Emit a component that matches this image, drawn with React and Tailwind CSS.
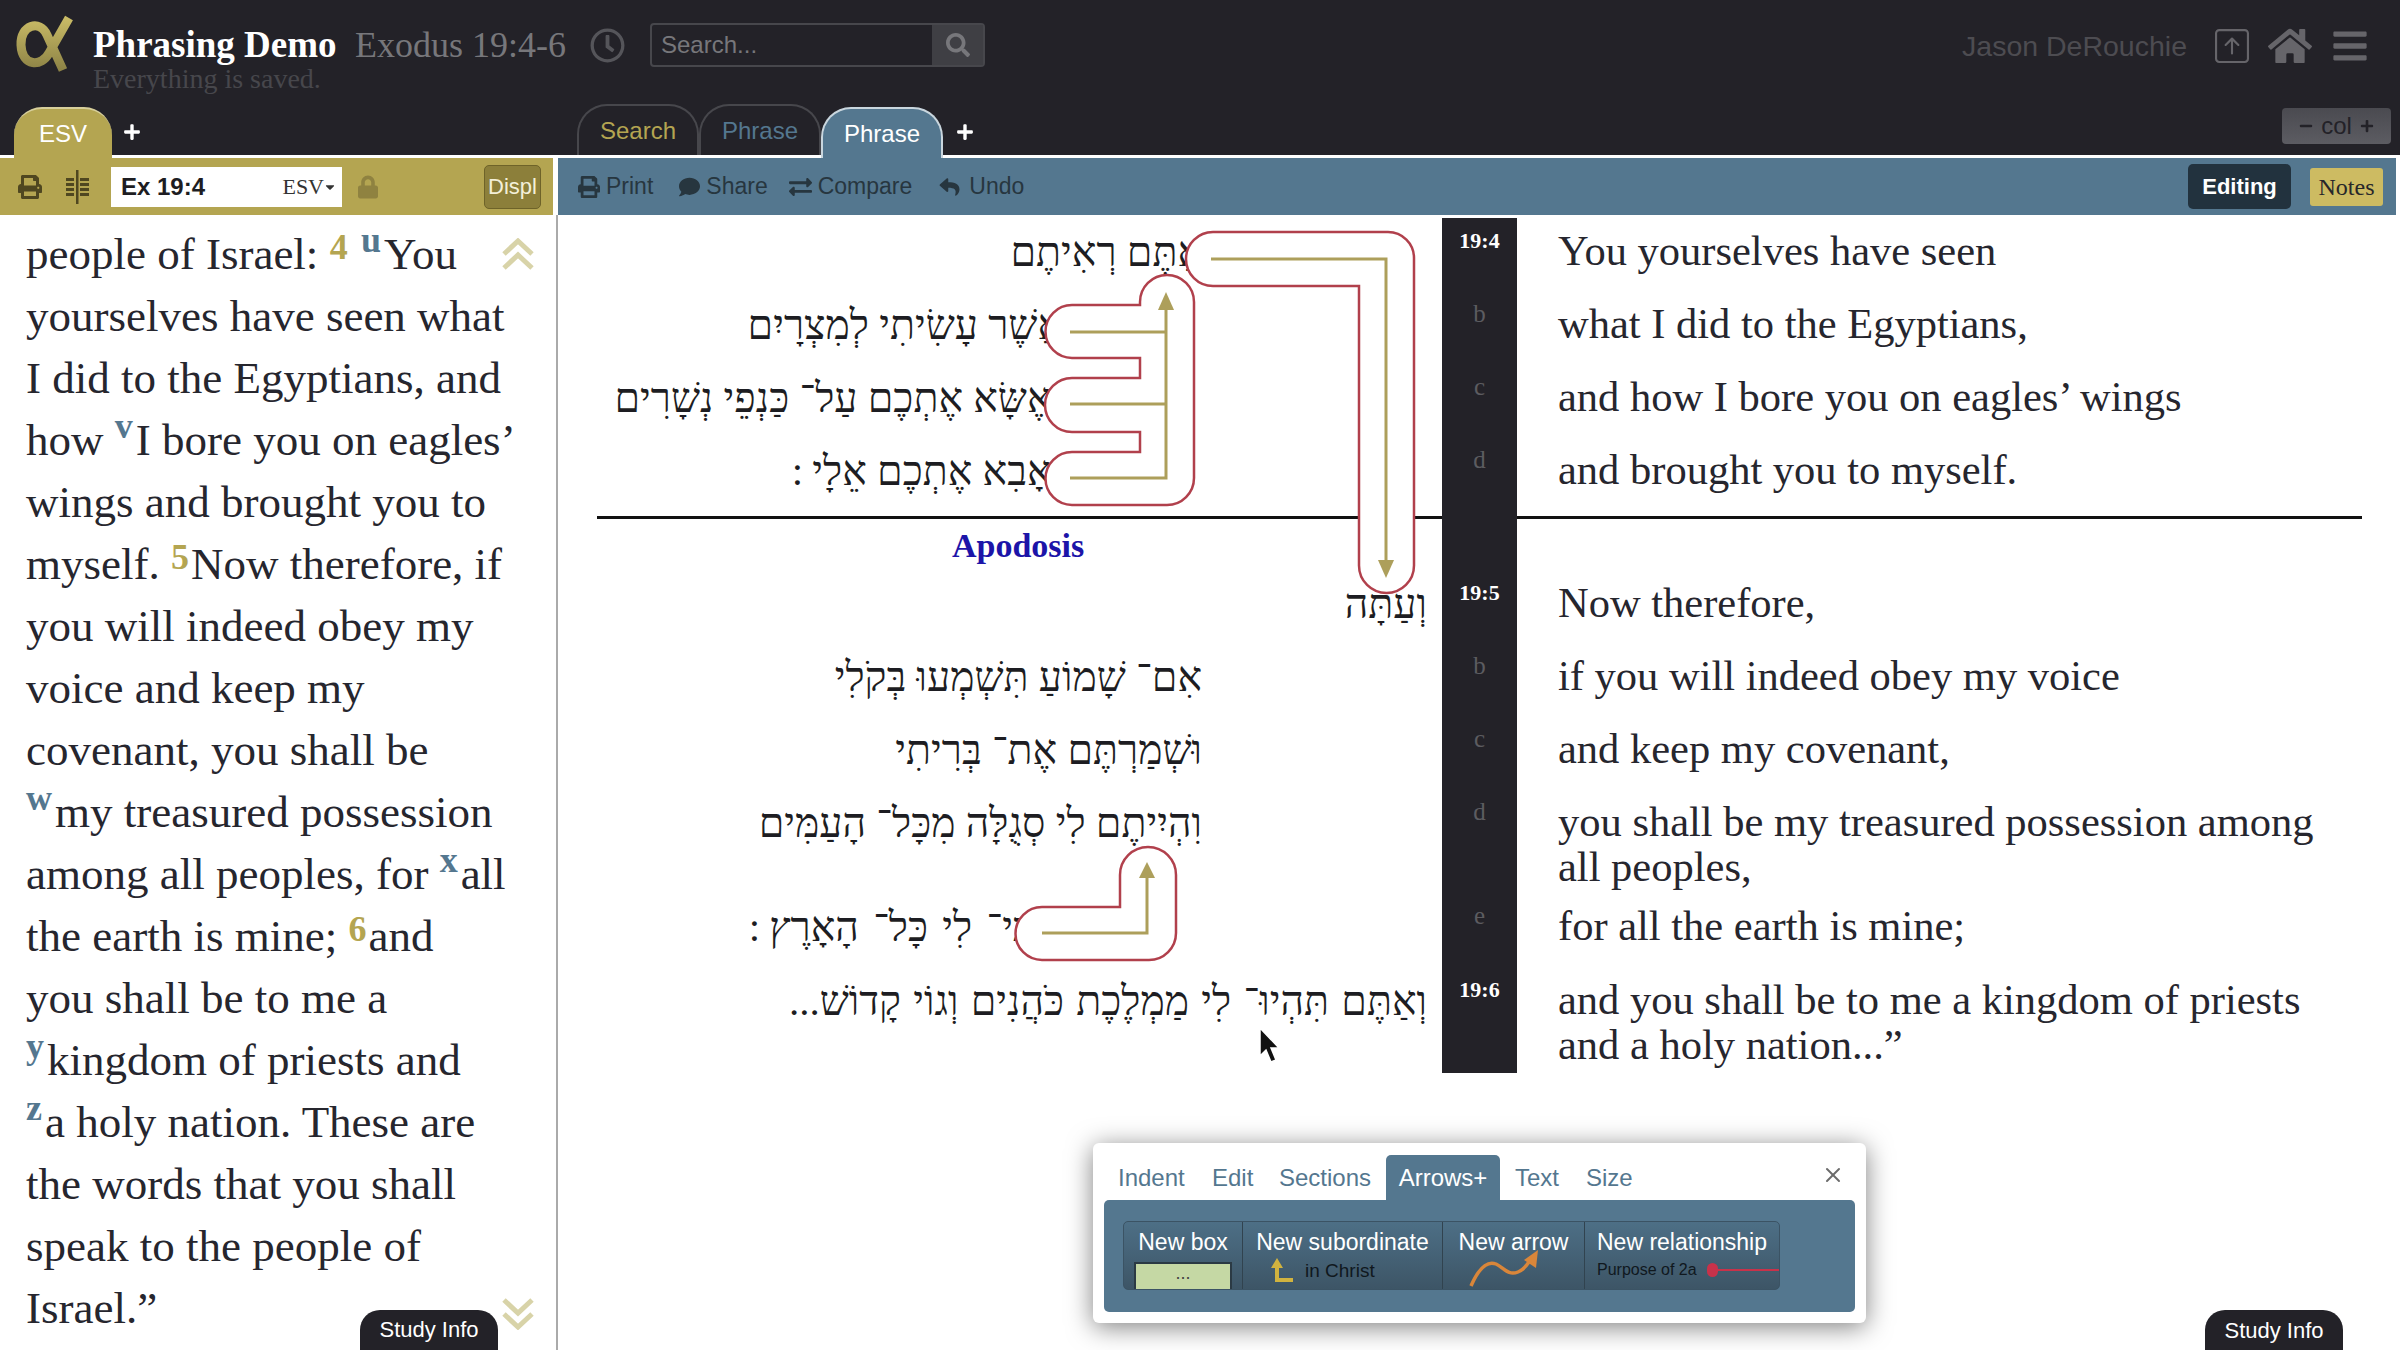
import React from 'react';
import { FaPrint, FaComment, FaExchangeAlt, FaReply, FaHome, FaBars, FaLock, FaSearch, FaRegClock, FaPlus, FaMinus, FaCaretDown } from 'react-icons/fa';
import { BsArrowUpSquare } from 'react-icons/bs';
import { X } from 'lucide-react';

const rows = [
  { ref: '19:4', h: 73, pr: 240, he: 'אַתֶּם רְאִיתֶם', en: ['You yourselves have seen'] },
  { ref: 'b', h: 73, pr: 380, he: 'אֲשֶׁר עָשִׂיתִי לְמִצְרָיִם', en: ['what I did to the Egyptians,'] },
  { ref: 'c', h: 73, pr: 380, he: 'וָאֶשָּׂא אֶתְכֶם עַל־ כַּנְפֵי נְשָׁרִים', en: ['and how I bore you on eagles’ wings'] },
  { ref: 'd', h: 73, pr: 380, he: 'וָאָבִא אֶתְכֶם אֵלָי\u2002׃', en: ['and brought you to myself.'] },
  { rule: true },
  { ref: '19:5', h: 73, pr: 15, he: 'וְעַתָּה', en: ['Now therefore,'] },
  { ref: 'b', h: 73, pr: 240, he: 'אִם־ שָׁמוֹעַ תִּשְׁמְעוּ בְּקֹלִי', en: ['if you will indeed obey my voice'] },
  { ref: 'c', h: 73, pr: 240, he: 'וּשְׁמַרְתֶּם אֶת־ בְּרִיתִי', en: ['and keep my covenant,'] },
  { ref: 'd', h: 104, pr: 240, he: 'וִהְיִיתֶם לִי סְגֻלָּה מִכָּל־ הָעַמִּים', en: ['you shall be my treasured possession among', 'all peoples,'] },
  { ref: 'e', h: 74, pr: 409, cls: '[word-spacing:4px]', he: 'כִּי־ לִי כָּל־ הָאָרֶץ\u2002׃', en: ['for all the earth is mine;'] },
  { ref: '19:6', h: 106, pr: 15, cls: '[word-spacing:2px]', he: 'וְאַתֶּם תִּהְיוּ־ לִי מַמְלֶכֶת כֹּהֲנִים וְגוֹי קָדוֹשׁ...', en: ['and you shall be to me a kingdom of priests', 'and a holy nation...”'] },
];

// g = gold verse number, b = blue note letter
const passage = [
  ['people of Israel: ', { g: '4' }, ' ', { b: 'u' }, 'You'],
  ['yourselves have seen what'],
  ['I did to the Egyptians, and'],
  ['how ', { b: 'v' }, 'I bore you on eagles’'],
  ['wings and brought you to'],
  ['myself. ', { g: '5' }, 'Now therefore, if'],
  ['you will indeed obey my'],
  ['voice and keep my'],
  ['covenant, you shall be'],
  [{ b: 'w' }, 'my treasured possession'],
  ['among all peoples, for ', { b: 'x' }, 'all'],
  ['the earth is mine; ', { g: '6' }, 'and'],
  ['you shall be to me a'],
  [{ b: 'y' }, 'kingdom of priests and'],
  [{ b: 'z' }, 'a holy nation. These are'],
  ['the words that you shall'],
  ['speak to the people of'],
  ['Israel.”'],
];

const Logo = () => (
  <svg width="62" height="60" viewBox="0 0 62 58" fill="none" className="-mt-[2px]">
    <defs>
      <linearGradient id="logoGold" x1="0" y1="0" x2="0" y2="1">
        <stop offset="0" stopColor="#c9bb66" />
        <stop offset="1" stopColor="#8d8346" />
      </linearGradient>
    </defs>
    <path d="M53 3 L33 38 C26 52 6 52 5 30 C4 10 24 4 31 20 L47 55" stroke="url(#logoGold)" strokeWidth="9" strokeLinecap="butt" />
  </svg>
);

const ColumnsIcon = () => (
  <svg width="28" height="34" viewBox="0 0 28 34" fill="#4f4720">
    <rect x="13" y="0" width="2.5" height="34" />
    <path d="M3 8h8v3H3zM3 13h8v3H3zM3 18h8v3H3zM3 23h8v3H3zM17 8h9v3h-9zM17 13h9v3h-9zM17 18h9v3h-9zM17 23h9v3h-9z" />
  </svg>
);

const Chevrons = ({ up, className }) => (
  <svg className={className} width="32" height="32" viewBox="0 0 32 32" fill="none" stroke="#d8d3a8" strokeWidth="5">
    {up ? <path d="M2 16 L16 3 L30 16 M2 30 L16 17 L30 30" /> : <path d="M2 2 L16 15 L30 2 M2 16 L16 29 L30 16" />}
  </svg>
);

const Tab = ({ label, active, color, text }) => (
  <div className={`w-[122px] h-[51px] rounded-t-[30px] flex items-center justify-center text-[24px] font-['Liberation_Sans',sans-serif] ${active ? `${color} text-white relative z-10 -mb-[3px] border-t-2 border-x-2 border-[#c9d6de]` : `border-t-2 border-x-2 border-[#47474c] ${text}`}`}>
    {label}
  </div>
);

const ToolButton = ({ icon, label, className }) => (
  <div className={`flex items-center gap-[6px] text-[23px] text-[#27363f] ${className}`}>
    {icon}
    <span>{label}</span>
  </div>
);

const StudyInfo = ({ className }) => (
  <div className={`absolute bottom-0 w-[138px] h-[40px] rounded-t-[20px] bg-[#232228] text-white text-[22px] flex items-center justify-center font-['Liberation_Sans',sans-serif] ${className}`}>
    Study Info
  </div>
);

const PhraseRow = ({ row }) => {
  if (row.rule) {
    return (
      <div className="grid grid-cols-[884px_75px_1fr] h-[60px]">
        <div className="pt-[6px] pl-[39px]">
          <div className="h-[3px] bg-[#111]" />
          <div className="pl-[355px] pt-[9px] text-[34px] leading-[36px] font-bold text-[#1c14a8]">Apodosis</div>
        </div>
        <div className="bg-[#232228]" />
        <div className="pt-[6px] pr-[38px]">
          <div className="h-[3px] bg-[#111]" />
        </div>
      </div>
    );
  }
  const isRef = row.ref.length > 1;
  return (
    <div className="grid grid-cols-[884px_75px_1fr]" style={{ height: row.h }}>
      <div dir="rtl" className={`text-[41px] leading-[68px] text-[#1d1d22] whitespace-nowrap ${row.cls || ''}`} style={{ paddingRight: row.pr }}>
        {row.he}
      </div>
      <div className={`bg-[#232228] text-center pt-[8px] leading-[30px] ${isRef ? 'text-white font-bold text-[22px]' : 'text-[#5c5c60] text-[25px]'}`}>
        {row.ref}
      </div>
      <div className="pl-[41px] pt-[10px] text-[42.5px] leading-[45px] text-[#26262e] whitespace-nowrap">
        {row.en.map((line) => <div key={line}>{line}</div>)}
      </div>
    </div>
  );
};

const ArrowOverlay = () => (
  <svg className="absolute left-0 top-0" width="884" height="858" viewBox="558 215 884 858" fill="none">
    <g fill="#fff" stroke="#b1404c" strokeWidth="2.5">
      <path d="M1213 232 H1388 A26 26 0 0 1 1414 258 V565.5 A27.5 27.5 0 0 1 1359 565.5 V286 H1213 A27 27 0 0 1 1213 232 Z" />
      <path d="M1140 305 V302 A27 27 0 0 1 1194 302 V478 A27 27 0 0 1 1167 505 H1072 A26.5 26.5 0 0 1 1072 452 H1140 V432 H1072 A27 27 0 0 1 1072 378 H1140 V358 H1072 A26.5 26.5 0 0 1 1072 305 Z" />
      <path d="M1120 907 V875 A28 28 0 0 1 1176 875 V933 A27 27 0 0 1 1149 960 H1042 A26.5 26.5 0 0 1 1042 907 Z" />
    </g>
    <g stroke="#ad9f5b" strokeWidth="3">
      <path d="M1211 259 H1386 V565" />
      <path d="M1070 332 H1166 M1070 404 H1166 M1070 478 H1166 V305" />
      <path d="M1042 933 H1147 V878" />
    </g>
    <g fill="#ad9f5b">
      <path d="M1378 560 H1394 L1386 578 Z" />
      <path d="M1158 310 H1174 L1166 292 Z" />
      <path d="M1139 878 H1155 L1147 862 Z" />
    </g>
  </svg>
);

const Palette = () => (
  <div className="absolute left-[535px] top-[928px] w-[773px] h-[180px] bg-white rounded-[6px] shadow-[0_4px_26px_rgba(0,0,0,0.5)] px-[11px] pt-[12px] font-['Liberation_Sans',sans-serif]">
    <div className="flex h-[45px] items-center text-[24px] text-[#54778f] pl-[14px]">
      <span className="w-[94px]">Indent</span>
      <span className="w-[67px]">Edit</span>
      <span className="w-[112px]">Sections</span>
      <span className="w-[114px] h-[45px] -ml-[5px] mr-[15px] bg-[#54778f] text-white rounded-t-[5px] flex items-center justify-center">Arrows+</span>
      <span className="w-[71px]">Text</span>
      <span>Size</span>
      <X className="ml-auto mr-[10px] mb-[6px] w-[24px] h-[24px] text-[#6b6b6b]" />
    </div>
    <div className="h-[112px] bg-[#54778f] rounded-[5px] pt-[21px] pl-[19px]">
      <div className="flex w-[657px] h-[69px] rounded-[5px] bg-gradient-to-b from-[#4d6f86] to-[#3d5566] border border-[#3b5364] text-[23px] text-white text-center">
        <div className="w-[119px] border-r border-[#31434f] flex flex-col items-center">
          <span className="leading-[40px]">New box</span>
          <div className="w-[98px] h-[27px] bg-[#c5d8a4] border-t-2 border-x-2 border-[#2b3a44] text-[#444] text-[18px] leading-[18px]">...</div>
        </div>
        <div className="w-[200px] border-r border-[#31434f] flex flex-col">
          <span className="leading-[40px]">New subordinate</span>
          <div className="flex items-center pl-[28px] gap-[10px] text-[19px] text-[#10181e] leading-[22px] -mt-[4px]">
            <svg width="24" height="26" viewBox="0 0 24 26" fill="none">
              <path d="M6 24 V6 M6 22 H22" stroke="#d1b33f" strokeWidth="4" />
              <path d="M0 10 L6 0 L12 10 Z" fill="#d1b33f" />
            </svg>
            <span>in Christ</span>
          </div>
        </div>
        <div className="w-[142px] border-r border-[#31434f] flex flex-col items-center overflow-hidden">
          <span className="leading-[40px]">New arrow</span>
          <svg width="76" height="40" viewBox="0 0 76 36" fill="none" className="-mt-[14px] -ml-[16px]">
            <path d="M3 36 C10 20 18 10 28 14 C36 18 40 26 50 22 C58 19 60 12 64 8" stroke="#d9863a" strokeWidth="3.5" />
            <path d="M56 10 L70 0 L68 18 Z" fill="#d9863a" />
          </svg>
        </div>
        <div className="flex-1 flex flex-col overflow-hidden">
          <span className="leading-[40px]">New relationship</span>
          <div className="flex items-center pl-[12px] text-[16px] text-[#10181e] leading-[20px] -mt-[2px]">
            <span>Purpose of 2a</span>
            <span className="w-[11px] h-[14px] rounded-full bg-[#c8324a] ml-[10px]" />
            <span className="flex-1 h-[2px] bg-[#c8324a]" />
          </div>
        </div>
      </div>
    </div>
  </div>
);

const App = () => (
  <div className="w-[2400px] h-[1350px] overflow-hidden bg-white flex flex-col font-['Liberation_Serif',serif]">
    {/* top bar */}
    <div className="bg-[#232228] h-[155px] flex flex-col shrink-0">
      <div className="h-[104px] flex items-start pl-[16px] pt-[16px]">
        <Logo />
        <div className="ml-[15px]">
          <div className="flex items-center h-[58px]">
            <span className="text-[37px] font-bold text-white leading-[58px] w-[262px] whitespace-nowrap">Phrasing Demo</span>
            <span className="text-[36px] text-[#77777b] w-[235px] whitespace-nowrap">Exodus 19:4-6</span>
            <FaRegClock className="w-[35px] h-[35px] text-[#55555a]" />
            <div className="ml-[25px] w-[335px] h-[44px] border-2 border-[#47474c] rounded-[4px] flex items-center font-['Liberation_Sans',sans-serif]">
              <span className="pl-[9px] text-[24px] text-[#77777b] flex-1">Search...</span>
              <span className="w-[51px] h-full bg-[#3f3f44] flex items-center justify-center">
                <FaSearch className="w-[24px] h-[24px] text-[#77777b]" />
              </span>
            </div>
          </div>
          <div className="-mt-[12px] text-[28px] leading-[34px] text-[#47474c]">Everything is saved.</div>
        </div>
        <div className="ml-auto mr-[30px] flex items-center h-[40px] mt-[10px] font-['Liberation_Sans',sans-serif] text-[#4d4c51]">
          <span className="text-[28.5px]">Jason DeRouchie</span>
          <BsArrowUpSquare className="ml-[28px] w-[34px] h-[34px] text-[#66656a]" />
          <FaHome className="ml-[19px] w-[44px] h-[40px] text-[#66656a]" />
          <FaBars className="ml-[18px] w-[40px] h-[38px] text-[#66656a]" />
        </div>
      </div>
      <div className="flex items-end h-[51px]">
        <div className="w-[558px] flex items-end pl-[14px]">
          <div className="w-[98px] h-[51px] rounded-t-[28px] bg-[#b4a551] border-t-2 border-[#d7cf9b] text-white text-[24px] flex items-center justify-center font-['Liberation_Sans',sans-serif] relative z-10 -mb-[3px]">ESV</div>
          <FaPlus className="ml-[11px] mb-[14px] w-[18px] h-[18px] text-white" />
        </div>
        <div className="flex items-end pl-[19px] flex-1">
          <Tab label="Search" text="text-[#b4a551]" />
          <Tab label="Phrase" text="text-[#54778f]" />
          <Tab label="Phrase" active color="bg-[#54778f]" />
          <FaPlus className="ml-[13px] mb-[14px] w-[18px] h-[18px] text-white" />
          <div className="ml-auto mr-[9px] mb-[11px] w-[109px] h-[36px] rounded-[4px] bg-gradient-to-b from-[#4a4a50] to-[#5c5c62] flex items-center justify-center gap-[8px] text-[24px] text-[#232228] font-['Liberation_Sans',sans-serif]">
            <FaMinus className="w-[14px] h-[14px]" />
            <span>col</span>
            <FaPlus className="w-[14px] h-[14px]" />
          </div>
        </div>
      </div>
    </div>

    {/* toolbars */}
    <div className="flex h-[60px] shrink-0 border-t-[3px] border-white font-['Liberation_Sans',sans-serif]">
      <div className="w-[553px] bg-[#b4a551] flex items-center pl-[18px]">
        <FaPrint className="w-[24px] h-[28px] text-[#4f4720]" />
        <span className="ml-[21px]"><ColumnsIcon /></span>
        <div className="ml-[20px] w-[231px] h-[40px] bg-white flex items-center pl-[10px] pr-[6px]">
          <span className="flex-1 text-[24px] font-bold text-[#1d1d22]">Ex 19:4</span>
          <span className="text-[22px] text-[#333] font-['Liberation_Serif',serif]">ESV</span>
          <FaCaretDown className="w-[12px] h-[14px] text-[#333]" />
        </div>
        <FaLock className="ml-[16px] w-[20px] h-[30px] text-[#8f8240]" />
        <div className="ml-[106px] w-[57px] h-[44px] rounded-[5px] bg-[#8c7f3a] border border-[#6e6329] flex items-center justify-center text-[22px] text-[#f3efd8]">Displ</div>
      </div>
      <div className="w-[5px] bg-white" />
      <div className="flex-1 bg-[#54778f] flex items-center mr-[4px] pl-[20px]">
        <ToolButton icon={<FaPrint className="w-[22px] h-[24px]" />} label="Print" />
        <ToolButton icon={<FaComment className="w-[21px] h-[22px]" />} label="Share" className="ml-[26px]" />
        <ToolButton icon={<FaExchangeAlt className="w-[23px] h-[24px]" />} label="Compare" className="ml-[21px]" />
        <ToolButton icon={<FaReply className="w-[27px] h-[20px]" />} label="Undo" className="ml-[24px]" />
        <div className="ml-auto w-[103px] h-[45px] rounded-[5px] bg-[#22323e] text-white font-bold text-[22px] flex items-center justify-center">Editing</div>
        <div className="ml-[19px] mr-[13px] w-[73px] h-[38px] rounded-[3px] bg-[#cdbb62] text-[#27272a] text-[24px] flex items-center justify-center font-['Liberation_Serif',serif]">Notes</div>
      </div>
    </div>

    {/* panels */}
    <div className="flex flex-1 min-h-0">
      <div className="w-[558px] shrink-0 border-r-2 border-[#aaaaaa] relative pt-[8px] pl-[26px] text-[45px] leading-[62px] text-[#26262e] whitespace-nowrap">
        {passage.map((line, i) => (
          <div key={i} className="h-[62px]">
            {line.map((part, j) => {
              if (typeof part === 'string') return <span key={j}>{part}</span>;
              if (part.g) return <sup key={j} className="text-[#b4a551] font-bold text-[36px] leading-none top-[-10px] mr-[2px]">{part.g}</sup>;
              return <sup key={j} className="text-[#54778f] font-bold text-[36px] leading-none top-[-17px] mr-[3px]">{part.b}</sup>;
            })}
          </div>
        ))}
        <Chevrons up className="absolute left-[502px] top-[23px]" />
        <Chevrons className="absolute left-[502px] top-[1083px]" />
        <StudyInfo className="left-[360px]" />
      </div>

      <div className="flex-1 relative">
        <div className="pt-[3px]">
          {rows.map((row, i) => <PhraseRow key={i} row={row} />)}
        </div>
        <ArrowOverlay />
        <Palette />
        <StudyInfo className="left-[1647px]" />
        {/* mouse pointer */}
        <svg className="absolute left-[700px] top-[811px]" width="22" height="38" viewBox="0 0 22 38">
          <path d="M2 2 V30 L8 24 L13 36 L18 34 L13 22 L21 22 Z" fill="#111" stroke="#fff" strokeWidth="1.5" />
        </svg>
      </div>
    </div>
  </div>
);

export default App;
